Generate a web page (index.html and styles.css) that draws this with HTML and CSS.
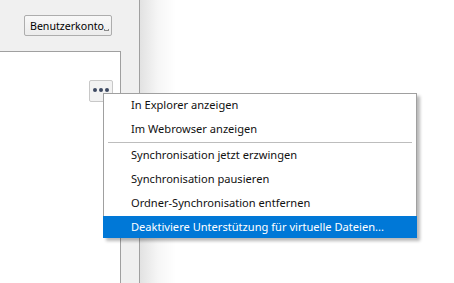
FILE: index.html
```html
<!DOCTYPE html>
<html>
<head>
<meta charset="utf-8">
<link rel="stylesheet" href="styles.css">
</head>
<body>
<div class="app">
  <div class="side">
    <div class="header">
      <button class="account"><span class="label">Benutzerkonto</span><span class="caret"></span></button>
    </div>
    <div class="panel">
      <button class="more"><span class="dot"></span><span class="dot"></span><span class="dot"></span></button>
    </div>
  </div>
  <div class="divider"></div>
  <div class="main"></div>
</div>
<div class="menu">
  <div class="item">In Explorer anzeigen</div>
  <div class="item">Im Webrowser anzeigen</div>
  <div class="sep"></div>
  <div class="item">Synchronisation jetzt erzwingen</div>
  <div class="item">Synchronisation pausieren</div>
  <div class="item">Ordner-Synchronisation entfernen</div>
  <div class="item active">Deaktiviere Unterstützung für virtuelle Dateien...</div>
</div>
</body>
</html>
```

FILE: styles.css
```css
html, body {
  margin: 0;
  padding: 0;
  width: 454px;
  height: 283px;
  overflow: hidden;
  background: #ffffff;
  font-family: "Noto Sans", "Liberation Sans", sans-serif;
  font-size: 11.1px;
  color: #000;
}

.app {
  display: flex;
  height: 283px;
}

.side {
  width: 139px;
  background: #f0f0f0;
  display: flex;
  flex-direction: column;
}

.header {
  height: 51px;
  box-sizing: border-box;
  padding: 15px 0 0 24px;
}

.account {
  height: 21px;
  width: 88px;
  box-sizing: border-box;
  border: 1px solid #adadad;
  border-radius: 2px;
  background: linear-gradient(#f8f8f8, #ececec);
  font-family: inherit;
  font-size: 10.6px;
  padding: 0 0 0 5px;
  display: flex;
  align-items: center;
  position: relative;
  color: #000;
}

.label {
  white-space: nowrap;
}

.caret {
  position: absolute;
  right: 2px;
  bottom: 4px;
  width: 5px;
  height: 2px;
  box-sizing: border-box;
  border-left: 1px solid #8a8a8a;
  border-right: 1px solid #8a8a8a;
  border-bottom: 1px solid #8a8a8a;
}

.panel {
  flex: 1;
  width: 121px;
  box-sizing: border-box;
  background: #ffffff;
  border-top: 1px solid #a0a0a0;
  border-right: 1px solid #a0a0a0;
  display: flex;
  justify-content: flex-end;
  align-items: flex-start;
  padding: 28px 7px 0 0;
}

.more {
  width: 24px;
  height: 22px;
  box-sizing: border-box;
  border: 1px solid #c8c8c8;
  border-radius: 2px;
  background: #f2f2f2;
  padding: 0;
  display: flex;
  justify-content: center;
  align-items: center;
  gap: 2px;
}

.dot {
  width: 4px;
  height: 4px;
  border-radius: 50%;
  background: #3e4a62;
  margin-top: -2px;
}

.divider {
  width: 1px;
  background: #a0a0a0;
}

.main {
  flex: 1;
  background: linear-gradient(to right, #e2e2e2 0px, #f6f6f6 18px, #ffffff 36px);
}

.menu {
  position: absolute;
  left: 103px;
  top: 93px;
  width: 314px;
  box-sizing: border-box;
  background: #ffffff;
  border: 1px solid #a0a0a0;
  border-bottom: none;
  box-shadow: 3px 3px 3px rgba(0, 0, 0, 0.28);
  display: flex;
  flex-direction: column;
}

.item {
  height: 22px;
  line-height: 22px;
  padding-left: 27px;
  margin-bottom: 2px;
  white-space: nowrap;
  color: #111111;
}

.item:last-child {
  margin-bottom: 0;
}

.sep {
  height: 1px;
  background: #bdbdbd;
  margin: 0 4px 1px 4px;
}

.item.active {
  background: #0078d7;
  color: #ffffff;
  margin: 0 -1px;
  padding-left: 28px;
}
```
